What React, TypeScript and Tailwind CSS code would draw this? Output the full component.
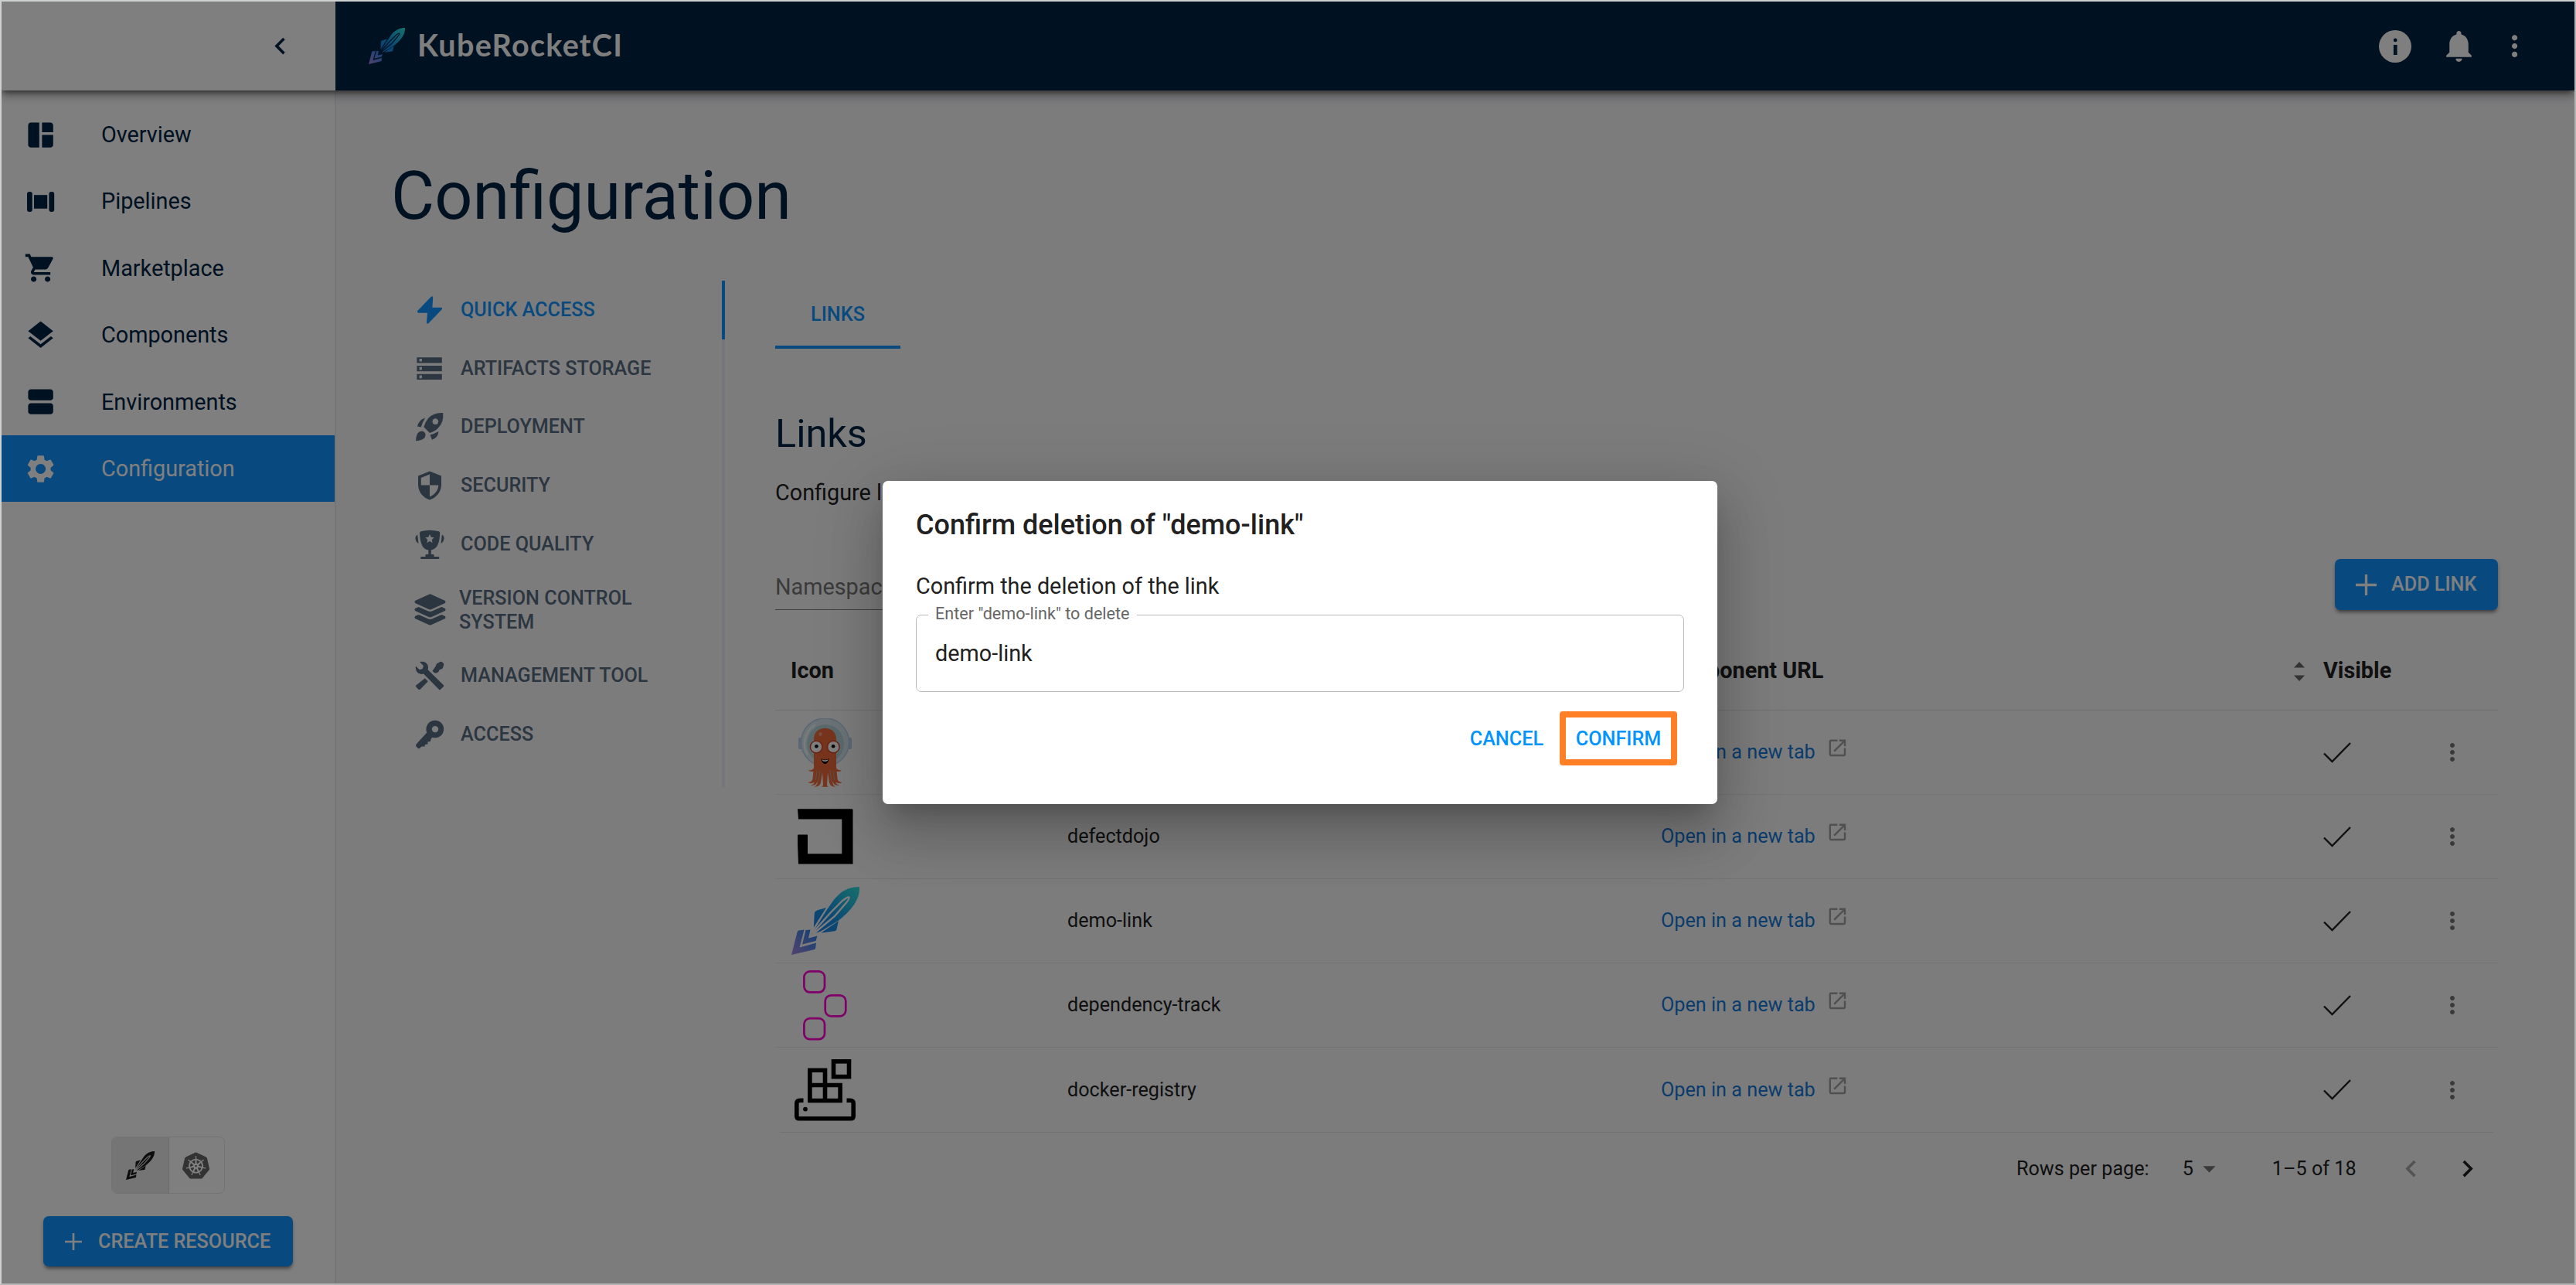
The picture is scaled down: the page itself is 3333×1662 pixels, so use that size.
import type { ReactNode } from "react";
import {
  MdArrowDropDown,
  MdChevronLeft,
  MdChevronRight,
  MdLayers,
  MdMoreVert,
  MdNotifications,
  MdOutlineOpenInNew,
  MdSettings,
  MdShoppingCart,
  MdSpaceDashboard,
  MdStorage,
  MdViewAgenda,
} from "react-icons/md";
import { FaLayerGroup } from "react-icons/fa6";
import { SiKubernetes } from "react-icons/si";

/* ---------- Icons ---------- */

function RocketLogo({ id, size, mono = false }: { id: string; size: number; mono?: boolean }) {
  return (
    <svg width={size} height={size} viewBox="0 0 88 88" className="shrink-0">
      <defs>
        <linearGradient id={`${id}-fill`} x1="88" y1="0" x2="0" y2="88" gradientUnits="userSpaceOnUse">
          <stop offset="0" stopColor={mono ? "#1c1c1c" : "#30e0d6"} />
          <stop offset="0.42" stopColor={mono ? "#1c1c1c" : "#1493e8"} />
          <stop offset="0.62" stopColor={mono ? "#1c1c1c" : "#1c82e4"} />
          <stop offset="1" stopColor={mono ? "#1c1c1c" : "#a886e0"} />
        </linearGradient>
        <mask id={`${id}-slits`} maskUnits="userSpaceOnUse" x="0" y="0" width="88" height="88">
          <rect width="88" height="88" fill="#fff" />
          <path
            d="M27 60 L50 34 L66 18 Q72 13 74.5 13.5 Q75.500 15 71 20.500 L56 38 L27 62"
            fill="none"
            stroke="#000"
            strokeWidth="2.4"
          />
        </mask>
      </defs>
      <g fill={`url(#${id}-fill)`}>
        <path
          mask={`url(#${id}-slits)`}
          d="M88 0 C74 0 65 5 55.500 16 L46 29.500 L26 61.500 L38 57.500 L61 43.500 C75 32 89 18 88 0 Z"
        />
        <path d="M45 27 L33 30.500 Q30 31.500 29.800 34 L28.800 52.500 Z" />
        <path d="M61 44 L58.500 55 Q58 57 56 57.300 L38.500 59.500 Z" />
        <path d="M16.500 55.500 L9.500 56.500 Q8 57 7.600 58.500 L0 88 L30 81 Q31 80.500 31.200 79 L32 72.500 L10.500 78.500 Z" />
        <path d="M24.500 55.500 L18.500 56 L14 74.500 L31.500 70 L33.500 63.500 L22 66.500 Z" />
      </g>
    </svg>
  );
}

function PipelineIcon() {
  return (
    <svg width="43.2" height="43.2" viewBox="0 0 43.2 43.2" fill="currentColor">
      <rect x="4" y="9" width="6.8" height="26" rx="3" />
      <rect x="13" y="13.200" width="17.200" height="17.600" />
      <rect x="32.400" y="9" width="6.800" height="26" rx="3" />
    </svg>
  );
}

function BoltIcon() {
  return (
    <svg width="42" height="42" viewBox="0 0 42 42" fill="currentColor">
      <path d="M22.600 4 Q25.300 2.200 25.200 5.500 L24.400 17.700 H35.500 Q38 18.200 36.600 20.300 L19.600 38 Q17 39.900 17 36.500 L18 24.800 H6.400 Q4 24 5.500 21.800 Z" />
    </svg>
  );
}

function RocketIcon() {
  return (
    <svg width="42" height="42" viewBox="0 0 42 42" fill="currentColor">
      <path
        fillRule="evenodd"
        d="M38.200 3 Q27 2 19.500 9.500 Q15.500 14 13.300 21.200 L21 29 Q28 26.800 32 22.500 Q39.500 15 38.200 3 Z M28.300 10.300 a3.900 3.900 0 1 0 .01 0 Z"
      />
      <path d="M15.200 9.400 Q7 11.500 5 20.500 L9.700 21.500 Q11.500 15 15.200 9.400 Z" />
      <path d="M32.400 27 Q27 30 21.500 31.600 L24 37.800 Q32 35 32.400 27 Z" />
      <path d="M10.500 26.600 Q3.500 27 3 39.200 Q15 38.800 15.600 31.800 Q15.200 27 10.500 26.600 Z" />
    </svg>
  );
}

function ShieldIcon() {
  return (
    <svg width="42" height="42" viewBox="0 0 42 42" fill="currentColor">
      <path
        fillRule="evenodd"
        d="M21 2.500 L36 8.500 V20 C36 29 29.500 37 21 39.500 C12.500 37 6 29 6 20 V8.500 Z M21 6.600 L9.800 11 V20.500 H21 Z M21 20.500 V35.400 C27.500 33 32 27 32.300 20.500 Z"
      />
    </svg>
  );
}

function TrophyIcon() {
  return (
    <svg width="42" height="42" viewBox="0 0 42 42" fill="currentColor">
      <path
        fillRule="evenodd"
        d="M9.500 4.300 Q21 1 33 4.300 Q34.500 5 34.200 7 C33.700 18 31.500 26.500 23.500 28.300 L22.800 28.500 V34 H26.500 V37 H32.500 Q34.500 38.500 32.500 40 H10 Q8 38.500 10 37 H15.500 V34 H19.300 V28.500 C11 27.500 8.500 18 8 7 Q8 5 9.500 4.300 Z M21 8 L19.200 11.700 L15.300 12.300 L18.200 15 L17.500 19 L21 17.100 L24.500 19 L23.800 15 L26.700 12.300 L22.800 11.700 Z"
      />
      <path d="M5.200 8.500 Q2 10.500 2.500 14 Q3 17.800 6.500 20 Z M36.800 8.500 Q40 10.500 39.500 14 Q39 17.800 35.500 20 Z" />
    </svg>
  );
}

function ToolsIcon() {
  return (
    <svg width="42" height="42" viewBox="0 0 42 42" fill="currentColor">
      <path d="M9.600 2.800 Q17 2 18.800 8.500 Q19.300 11 18.600 13.200 L39 33.200 Q39.500 34 39 34.800 L34.800 38.900 Q34 39.500 33.200 38.900 L13 18.600 Q6.500 20 3.600 14.500 Q2.200 11.500 2.900 8.600 L7.800 13.200 L11.800 12 L12.900 8 L8.300 3.400 Q8.500 2.900 9.600 2.800 Z" />
      <path d="M33.500 3.500 Q35.500 2 37 3.200 L38.900 5 Q39.700 6.500 38.900 8 L37.800 11.500 L33.500 13.500 Q32.500 17 29.500 17.500 L27.300 17.500 L24.500 15 L26 12.500 L28.500 9 L30 5.500 Z" />
      <path d="M14.800 24.300 L18.800 28.300 L8.800 38.500 Q7.500 39.500 6.300 38.500 L3.500 35.700 Q2.500 34.500 3.500 33.300 Z" />
    </svg>
  );
}

function KeyIcon() {
  return (
    <svg width="42" height="42" viewBox="0 0 42 42" fill="currentColor">
      <path
        fillRule="evenodd"
        d="M28 2.700 a11.300 11.300 0 1 1 -3.700 22 L22.600 27 L21.800 30 L18.500 30.500 L18.300 33.500 L14.800 34 L14.600 36.600 L10.500 36.400 L7.500 39.200 Q5.500 39.500 3 35.500 Q3 34 4 33 L17.300 18.500 A11.300 11.300 0 0 1 28 2.700 Z M28 9.900 a4.200 4.200 0 1 0 .01 0 Z"
      />
    </svg>
  );
}

function InfoIcon() {
  return (
    <svg width="42" height="42" viewBox="0 0 42 42">
      <circle cx="21" cy="21" r="21" fill="currentColor" />
      <circle cx="21.200" cy="12.900" r="2.400" fill="#002242" />
      <rect x="18.900" y="19" width="4.700" height="13" fill="#002242" />
    </svg>
  );
}

function PlusIcon({ size }: { size: number }) {
  return (
    <svg width={size} height={size} viewBox="0 0 26 26" fill="none" stroke="currentColor" strokeWidth="3.200">
      <path d="M13 0 V26 M0 13 H26" />
    </svg>
  );
}

function ArgoIcon() {
  return (
    <svg width="69" height="89" viewBox="0 0 69 89">
      <rect x="0" y="25" width="6" height="15" rx="2" fill="#b6cfea" />
      <rect x="63" y="25" width="6" height="15" rx="2" fill="#b6cfea" />
      <circle cx="34.500" cy="31" r="31" fill="#d9e6ec" stroke="#b6cfea" strokeWidth="1.500" />
      <ellipse cx="35" cy="33" rx="24" ry="25" fill="#b5d5d8" />
      <path d="M12 47 C5 37 6 18 22 8" fill="none" stroke="#f2f8fa" strokeWidth="2.200" />
      <path
        d="M20 27 C20 8 49 8 49 27 V64 C50 67 53 67 56 67.500 C53 69.500 50 69 49.500 68.500 L50.500 78 C51 82 54 82.500 57 83 C53 84.500 50 84 48 82.500 C49 85.500 51 86 53 86.500 C48 87.500 45 85 44 81 C44 85 45.500 87.500 48 88.500 C42 88.500 40 86 39.500 80 L38 70 L37 86 C37.500 88 38 88.500 39.500 88.800 H29.500 C31 88.500 31.500 88 32 86 L31 70 L29.500 80 C29 86 27 88.500 20 88.500 C23.500 87.500 25 85 25 81 C24 85 21 87.500 16 86.500 C18 86 20 85.500 21 82.500 C19 84 16 84.500 12 83 C15 82.500 18 82 18.500 78 L19.500 68.500 C19 69 16 69.500 13 67.500 C16 67 19 67 20 64 Z"
        fill="#ee6a3a"
      />
      <path d="M28 67 L26 82 M41 67 L43 82 M24 68 L22.500 80 M45 68 L46.500 80" stroke="#b0a8a6" strokeWidth="0.900" />
      <circle cx="23.200" cy="37" r="8.600" fill="#d9472c" />
      <circle cx="45.300" cy="37" r="8.600" fill="#d9472c" />
      <circle cx="23.200" cy="37" r="7" fill="#fff" />
      <circle cx="45.300" cy="37" r="7" fill="#fff" />
      <circle cx="23.400" cy="36.200" r="2.300" />
      <circle cx="45.100" cy="36.200" r="2.300" />
      <circle cx="28.500" cy="20.500" r="2.400" fill="#f79a76" />
      <path d="M29.500 52 Q34.500 55.500 39.500 52 Q38.500 59 34.500 59 Q30.500 59 29.500 52 Z" />
      <path d="M30.500 53 Q34.500 55.500 38.500 53 L37.800 55 Q34.500 57 31.200 55 Z" fill="#fff" />
    </svg>
  );
}

function DefectDojoIcon() {
  return (
    <svg width="72" height="72" viewBox="0 0 72 72">
      <path d="M0 0.300 H70.500 L71.500 1.300 V71.500 H1 L0 46 V34 L1 33.500 H13 V58.300 H57.300 V13.500 H1 Z" />
    </svg>
  );
}

function DependencyTrackIcon() {
  return (
    <svg width="57" height="91" viewBox="0 0 57 91" fill="none" stroke="#ff00d0" strokeWidth="2.700">
      <rect x="1.400" y="1.400" width="26.600" height="27" rx="7.500" />
      <rect x="28.700" y="32.300" width="26.600" height="27" rx="7.500" />
      <rect x="1.400" y="62.200" width="26.600" height="27" rx="7.500" />
    </svg>
  );
}

function RegistryIcon() {
  return (
    <svg width="79" height="80" viewBox="0 0 79 80" fill="none" stroke="#000" strokeWidth="5.600">
      <rect x="50.500" y="2.800" width="20" height="19.800" />
      <path d="M19.900 54 V14.200 H39.500 V54 M17.100 33.500 H59.100 V53.500 H17.100" />
      <path d="M11.500 53.300 H7 Q2.800 53.300 2.800 57 V73.500 Q2.800 76.700 6 76.700 H73 Q76.200 76.700 76.200 73.500 V57 Q76.200 53.300 72 53.300 H67.500" />
      <circle cx="14" cy="64.600" r="2.900" fill="#000" stroke="none" />
    </svg>
  );
}

function CheckIcon() {
  return (
    <svg width="36" height="27" viewBox="0 0 36 27" fill="none" stroke="#212121" strokeWidth="2.400">
      <path d="M1 14.500 L11.500 25 L35 1" />
    </svg>
  );
}

/* ---------- Sidebar ---------- */

const navItems: { label: string; icon: ReactNode; active?: boolean }[] = [
  { label: "Overview", icon: <MdSpaceDashboard size={43.2} /> },
  { label: "Pipelines", icon: <PipelineIcon /> },
  { label: "Marketplace", icon: <MdShoppingCart size={43.2} /> },
  { label: "Components", icon: <MdLayers size={43.2} /> },
  { label: "Environments", icon: <MdViewAgenda size={43.2} /> },
  { label: "Configuration", icon: <MdSettings size={43.2} />, active: true },
];

function Sidebar() {
  return (
    <aside className="flex w-[433px] shrink-0 flex-col border-r-2 border-[#ebebf0] bg-white pt-[14px]">
      <nav className="flex flex-col text-[28.8px] text-[#002242]">
        {navItems.map((item) => (
          <a
            key={item.label}
            className={
              item.active
                ? "flex h-[86.4px] items-center bg-[#1095ff] pl-[29px] text-white"
                : "flex h-[86.4px] items-center pl-[29px]"
            }
          >
            <span className="w-[100px]">{item.icon}</span>
            <span className="pt-px">{item.label}</span>
          </a>
        ))}
      </nav>
      <div className="mt-auto flex flex-col items-center pb-[22px]">
        <div className="flex h-[74px] w-[147px] overflow-hidden rounded-[7px] border border-[#e6e6e6]">
          <button className="flex w-[74px] items-center justify-center border-r border-[#d8d8d8] bg-[#ebebeb]">
            <RocketLogo id="toggle" size={37} mono />
          </button>
          <button className="flex w-[71px] items-center justify-center pr-[2px] text-[#666]">
            <SiKubernetes size={35} />
          </button>
        </div>
        <button className="mt-[29px] flex h-[65px] w-[323px] items-center rounded-[7px] bg-[#1095ff] pl-[28px] text-[25.2px] font-medium text-white shadow-[0_5px_4px_-3px_rgba(0,0,0,0.35),0_3px_5px_0_rgba(0,0,0,0.25)]">
          <PlusIcon size={22} />
          <span className="ml-[21px]">CREATE RESOURCE</span>
        </button>
      </div>
    </aside>
  );
}

/* ---------- Top bar ---------- */

function TopBar() {
  return (
    <header className="relative z-10 flex h-[115px] shrink-0 shadow-[0_4px_7px_-2px_rgba(0,0,0,0.5),0_7px_12px_0_rgba(0,0,0,0.3)]">
      <div className="flex w-[432px] items-center justify-end bg-white pr-[50px] text-[#002242]">
        <MdChevronLeft size={43.2} />
      </div>
      <div className="flex flex-1 items-center bg-[#002242] pl-[43px] pr-[56px] text-white">
        <RocketLogo id="brand" size={47} />
        <span className="ml-[16px] pb-[4px] font-['Lato'] text-[39.5px] font-bold tracking-[1.3px]">KubeRocketCI</span>
        <div className="ml-auto flex items-center">
          <InfoIcon />
          <MdNotifications size={49} className="ml-[37px]" />
          <MdMoreVert size={43.2} className="ml-[26px]" />
        </div>
      </div>
    </header>
  );
}

/* ---------- Settings tabs ---------- */

const settingsTabs: { label: string; icon: ReactNode }[] = [
  { label: "QUICK ACCESS", icon: <BoltIcon /> },
  { label: "ARTIFACTS STORAGE", icon: <MdStorage size={43.2} className="scale-x-90" /> },
  { label: "DEPLOYMENT", icon: <RocketIcon /> },
  { label: "SECURITY", icon: <ShieldIcon /> },
  { label: "CODE QUALITY", icon: <TrophyIcon /> },
  { label: "VERSION CONTROL SYSTEM", icon: <FaLayerGroup size={45} /> },
  { label: "MANAGEMENT TOOL", icon: <ToolsIcon /> },
  { label: "ACCESS", icon: <KeyIcon /> },
];

function SettingsTabs() {
  return (
    <div className="flex h-[656px] w-[430px] shrink-0 text-[25.2px] font-medium text-[#596d80]">
      <div className="flex flex-1 flex-col">
        {settingsTabs.map((tab, i) => (
          <div
            key={tab.label}
            className={
              i === 0
                ? "flex h-[75.7px] items-center text-[#1095ff]"
                : i === 5
                  ? "flex h-[95px] items-center leading-[31px]"
                  : "flex h-[75.7px] items-center"
            }
          >
            <span className="flex w-[96px] justify-center">{tab.icon}</span>
            <span className={i === 5 ? "-ml-[10px] w-[240px]" : "-ml-[8px] whitespace-nowrap"}>{tab.label}</span>
          </div>
        ))}
      </div>
      <div className="flex w-[4px] flex-col bg-[#ebebf9]">
        <div className="h-[76px] bg-[#1095ff]" />
      </div>
    </div>
  );
}

/* ---------- Links table ---------- */

const rows: { name: string; icon: ReactNode }[] = [
  { name: "argocd", icon: <ArgoIcon /> },
  { name: "defectdojo", icon: <DefectDojoIcon /> },
  { name: "demo-link", icon: <RocketLogo id="row" size={88} /> },
  { name: "dependency-track", icon: <DependencyTrackIcon /> },
  { name: "docker-registry", icon: <RegistryIcon /> },
];

function LinksTable() {
  return (
    <div className="mt-[26px] text-[#212121]">
      <div className="grid h-[104px] grid-cols-[378px_768px_857px_1fr] items-center border-b border-[#dfdfe0] pt-[3px] text-[28.8px] font-bold">
        <div className="pl-[20px]">Icon</div>
        <div>Name</div>
        <div className="flex items-center justify-between pr-[24px]">
          Component URL
          <svg width="14" height="25" viewBox="0 0 14 25" fill="#666">
            <path d="M0 7.500 L7 0 L14 7.500 Z M0 17.500 L7 25 L14 17.500 Z" />
          </svg>
        </div>
        <div>Visible</div>
      </div>
      {rows.map((row, i) => (
        <div
          key={row.name}
          className={
            i === rows.length - 1
              ? "grid h-[109.1px] grid-cols-[378px_768px_857px_1fr] items-center text-[25.2px]"
              : "grid h-[109.1px] grid-cols-[378px_768px_857px_1fr] items-center border-b border-[#e6e6e8] text-[25.2px]"
          }
        >
          <div className="flex w-[129px] justify-center">{row.icon}</div>
          <div>{row.name}</div>
          <div className="flex items-center text-[#147ad8]">
            Open in a new tab
            <MdOutlineOpenInNew size={28.8} className="mb-[11px] ml-[14px] text-[#a0a0a0]" />
          </div>
          <div className="flex items-center">
            <CheckIcon />
            <MdMoreVert size={36} className="ml-[113px] text-[#757575]" />
          </div>
        </div>
      ))}
      <div className="mx-[6px] h-px bg-[#e2e2e4]" />
      <div className="flex h-[92px] items-center justify-end pr-[18px] text-[25.2px]">
        <span>Rows per page:</span>
        <span className="ml-[43px]">5</span>
        <MdArrowDropDown size={39} className="ml-[1px] text-[#757575]" />
        <span className="ml-[62px]">1–5 of 18</span>
        <MdChevronLeft size={43.2} className="ml-[49px] text-[#a6a6a6]" />
        <MdChevronRight size={43.2} className="ml-[30px]" />
      </div>
    </div>
  );
}

/* ---------- Dialog ---------- */

function DeleteDialog() {
  return (
    <div
      role="dialog"
      className="flex h-[418px] w-[1080px] flex-col rounded-[7px] bg-white px-[43px] text-[28.8px] text-[#212121] shadow-[0_20px_27px_-13px_rgba(0,0,0,0.2),0_43px_68px_5px_rgba(0,0,0,0.14),0_16px_83px_14px_rgba(0,0,0,0.12)]"
    >
      <h2 className="mt-[28px] text-[36px] leading-[58px] font-medium">Confirm deletion of "demo-link"</h2>
      <p className="mt-[28px] leading-[44px]">Confirm the deletion of the link</p>
      <div className="relative mt-[15px] flex h-[100px] items-center rounded-[7px] border border-[#b8b8b8] pt-[2px] pl-[24px]">
        <span className="absolute -top-[15px] left-[15px] bg-white pr-[9px] pl-[9px] text-[21.6px] leading-[25px] text-[#666]">
          Enter "demo-link" to delete
        </span>
        demo-link
      </div>
      <div className="mt-[25px] flex items-center justify-end pr-[9px] text-[25.2px] font-medium text-[#0094ff]">
        <button className="pt-[2px]">CANCEL</button>
        <button className="ml-[21px] h-[70px] w-[152px] rounded-[4px] border-8 border-[#ff7f27] pt-[2px]">CONFIRM</button>
      </div>
    </div>
  );
}

/* ---------- Page ---------- */

export default function App() {
  return (
    <div className="relative flex h-[1662px] w-[3333px] flex-col overflow-hidden border-2 border-t-[#cdd1d2] border-r-[#b4b4b4] border-b-[#b4b4b4] border-l-[#cdd1d2] bg-[#f8f8fb] font-['Roboto',sans-serif]">
      <TopBar />
      <div className="flex min-h-0 flex-1">
        <Sidebar />
        <main className="flex-1 pt-[87px] pr-[99px] pl-[73px]">
          <h1 className="-ml-[2px] text-[86.4px] leading-[100px] text-[#002242]">Configuration</h1>
          <div className="mt-[59px] flex gap-[65px]">
            <SettingsTabs />
            <section className="min-w-0 flex-1">
              <div className="flex h-[88px] w-[162px] items-center justify-center border-b-4 border-[#1095ff] pt-[4px] text-[25.2px] font-medium text-[#1095ff]">
                LINKS
              </div>
              <h2 className="mt-[80px] text-[50.4px] leading-[60px] text-[#002242]">Links</h2>
              <p className="mt-[25px] text-[28.8px] leading-[43px] text-[#212121]">Configure links for quick access to required tools.</p>
              <div className="mt-[64px] flex items-start justify-between">
                <div className="flex h-[66px] w-[520px] items-center border-b border-[#808080] pt-[9px] text-[28.8px] text-[#777]">
                  Namespaces
                </div>
                <button className="flex h-[66px] w-[211px] items-center rounded-[7px] bg-[#1095ff] pl-[27px] text-[25.2px] font-medium text-white shadow-[0_5px_4px_-3px_rgba(0,0,0,0.35),0_3px_5px_0_rgba(0,0,0,0.25)]">
                  <PlusIcon size={27} />
                  <span className="ml-[19px]">ADD LINK</span>
                </button>
              </div>
              <LinksTable />
            </section>
          </div>
        </main>
      </div>
      <div className="absolute inset-0 z-20 flex items-center justify-center bg-black/50 pl-[31px]">
        <DeleteDialog />
      </div>
    </div>
  );
}
